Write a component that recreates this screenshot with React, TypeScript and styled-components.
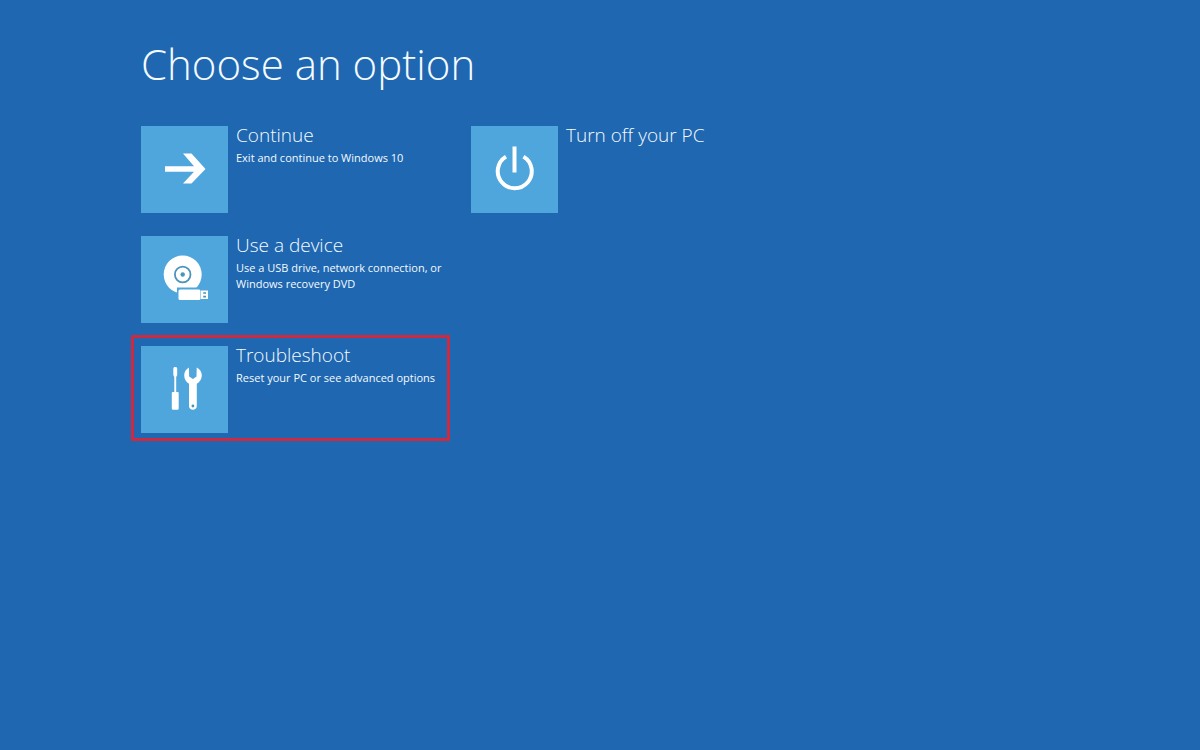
import React from "react";
import styled, { createGlobalStyle, css } from "styled-components";

const GlobalStyle = createGlobalStyle`
  *, *::before, *::after { box-sizing: border-box; }
  body {
    margin: 0;
    background: #1f67b1;
    color: #f4fbff;
    font-family: "Open Sans", "Noto Sans", sans-serif;
  }
`;

const Screen = styled.main`
  min-height: 100vh;
  padding: 34px 24px 40px 141px;
`;

const Title = styled.h1`
  margin: 0 0 32px;
  font-size: 42px;
  line-height: 60px;
  font-weight: 300;
`;

const Columns = styled.div`
  display: flex;
  flex-wrap: wrap;
  align-items: flex-start;
  gap: 23px;
`;

const OptionList = styled.ul`
  display: flex;
  flex-direction: column;
  gap: 23px;
  width: 307px;
  margin: 0;
  padding: 0;
  list-style: none;
`;

const OptionButton = styled.button<{ $marked?: boolean }>`
  position: relative;
  display: flex;
  align-items: flex-start;
  gap: 8px;
  width: 100%;
  padding: 0;
  border: 0;
  background: none;
  color: inherit;
  font-family: inherit;
  text-align: left;
  cursor: pointer;

  ${({ $marked }) =>
    $marked &&
    css`
      &::after {
        content: "";
        position: absolute;
        inset: -11px -2px -8px -10px;
        border: 3px solid #cb2a40;
        pointer-events: none;
      }
    `}
`;

const Tile = styled.span`
  flex: none;
  width: 87px;
  height: 87px;
  background: #4fa6dc;

  svg {
    display: block;
    width: 100%;
    height: 100%;
  }
`;

const Caption = styled.span`
  display: flex;
  flex-direction: column;
  gap: 6px;
  min-width: 0;
`;

const Name = styled.span`
  font-size: 19px;
  line-height: 18px;
  font-weight: 300;
  white-space: nowrap;
`;

const Details = styled.span`
  font-size: 11px;
  line-height: 16px;
  font-weight: 400;
`;

const ArrowIcon = () => (
  <svg viewBox="0 0 87 87" fill="#fff" aria-hidden="true">
    <path d="M24 40.2H53L42 27.5H50.5L64.5 43L50.5 57.5H42L53 45.8H24Z" />
  </svg>
);

const DeviceIcon = () => (
  <svg viewBox="0 0 87 87" aria-hidden="true">
    <circle cx="41.7" cy="38.5" r="19" fill="#fff" />
    <circle cx="41.7" cy="38.5" r="7.8" fill="none" stroke="#4a93bb" strokeWidth="1.8" />
    <circle cx="41.7" cy="38.5" r="2.2" fill="#4a93bb" />
    <path d="M36 51.5H60V65H36Z" fill="#4fa6dc" />
    <rect x="37.5" y="53.5" width="22" height="10.5" rx="1.5" fill="#fff" />
    <path d="M60 54.5H67V63H60Z" fill="#fff" />
    <path d="M62.2 56.2H65V57.8H62.2ZM62.2 59.8H65V61.4H62.2Z" fill="#4a93bb" />
  </svg>
);

const ToolsIcon = () => (
  <svg viewBox="0 0 87 87" fill="#fff" aria-hidden="true">
    <path d="M33 21H35.4L36.2 22.5V29L35.2 31V46H36.8Q37.7 46 37.7 47V62.5Q37.7 63.7 36.5 63.7H32Q30.8 63.7 30.8 62.5V47Q30.8 46 31.7 46H33.3V31L32.3 29V22.5Z" />
    <path d="M48 21.5L48.1 30.5L52 33L55.5 30.5L55.7 21.5C59 23 60.8 26 60.8 29.3C60.8 33 58.8 36 55.8 37.8V60C55.8 65 48 65 48 60V37.8C45 36 43.2 33 43.2 29.3C43.2 26 45 23 48 21.5Z" />
    <circle cx="51.9" cy="60" r="1.4" fill="#4a93bb" />
  </svg>
);

const PowerIcon = () => (
  <svg viewBox="0 0 87 87" fill="none" stroke="#fff" strokeWidth="4" aria-hidden="true">
    <path d="M43.5 20.5V46.5" />
    <path d="M35 30.6A17 17 0 1 0 52.5 30.6" />
  </svg>
);

interface Option {
  name: string;
  details?: string;
  icon: React.ReactNode;
  marked?: boolean;
}

const columns: Option[][] = [
  [
    { name: "Continue", details: "Exit and continue to Windows 10", icon: <ArrowIcon /> },
    {
      name: "Use a device",
      details: "Use a USB drive, network connection, or Windows recovery DVD",
      icon: <DeviceIcon />,
    },
    {
      name: "Troubleshoot",
      details: "Reset your PC or see advanced options",
      icon: <ToolsIcon />,
      marked: true,
    },
  ],
  [{ name: "Turn off your PC", icon: <PowerIcon /> }],
];

export default function App() {
  return (
    <>
      <GlobalStyle />
      <Screen>
        <Title>Choose an option</Title>
        <Columns>
          {columns.map((options, index) => (
            <OptionList key={index}>
              {options.map(({ name, details, icon, marked }) => (
                <li key={name}>
                  <OptionButton type="button" $marked={marked}>
                    <Tile>{icon}</Tile>
                    <Caption>
                      <Name>{name}</Name>
                      {details && <Details>{details}</Details>}
                    </Caption>
                  </OptionButton>
                </li>
              ))}
            </OptionList>
          ))}
        </Columns>
      </Screen>
    </>
  );
}
